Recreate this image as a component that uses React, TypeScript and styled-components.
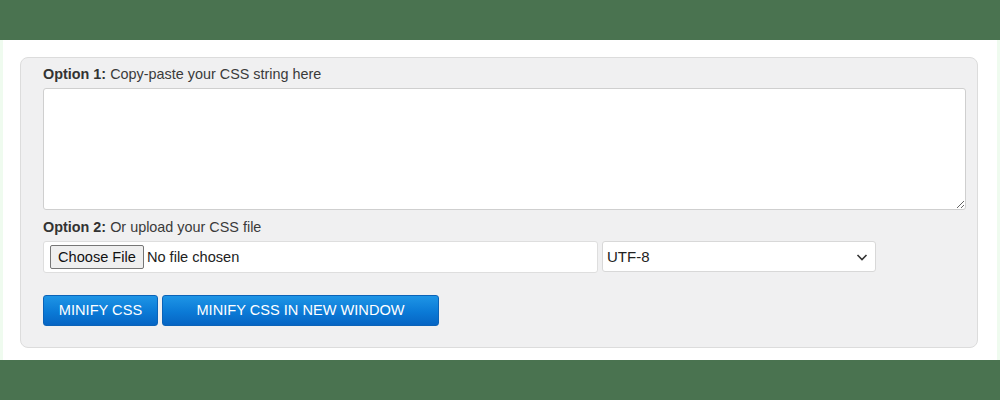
import React from "react";
import styled, { createGlobalStyle } from "styled-components";

const Global = createGlobalStyle`
  html, body { margin: 0; padding: 0; background: #4a7350; }
  body { font-family: "Liberation Sans", Arial, sans-serif; }
  * { box-sizing: border-box; }
`;

const Page = styled.div`
  width: 1000px;
  height: 400px;
  padding: 40px 0;
  background: #4a7350;
`;

const Sheet = styled.div`
  height: 320px;
  background: #ffffff;
  border-left: 3px solid #effbef;
  border-right: 3px solid #effbef;
  padding: 17px 20px 0 17px;
`;

const Panel = styled.div`
  width: 958px;
  height: 291px;
  background: #f0f0f1;
  border: 1px solid #dcdcdc;
  border-radius: 8px;
  padding: 8px 10px 0 22px;
  display: flex;
  flex-direction: column;
`;

const Label = styled.div`
  font-size: 14.4px;
  line-height: 17px;
  color: #3a3a3a;
  margin-bottom: 5px;
  b { font-weight: bold; color: #333; }
`;

const TextArea = styled.textarea`
  width: 923px;
  height: 122px;
  border: 1px solid #cfcfcf;
  border-radius: 3px;
  background: #fff;
  resize: vertical;
  margin: 0 0 9px 0;
  display: block;
  font-family: "Liberation Sans", Arial, sans-serif;
  outline: none;
`;

const Row = styled.div`
  display: flex;
  gap: 4px;
  align-items: flex-start;
`;

const FileBox = styled.div`
  width: 555px;
  height: 32px;
  background: #fff;
  border: 1px solid #dedede;
  border-radius: 3px;
  display: flex;
  align-items: center;
  padding-left: 6px;
  gap: 3px;
  font-size: 14.6px;
  color: #222;
`;

const ChooseButton = styled.span`
  height: 24px;
  padding: 0 7px 0 7px;
  display: flex;
  align-items: center;
  background: #efefef;
  border: 1px solid #767676;
  border-radius: 2px;
  font-size: 14.6px;
  color: #111;
`;

const Select = styled.div`
  width: 274px;
  height: 31px;
  background: #fff;
  border: 1px solid #d8d8d8;
  border-radius: 3px;
  display: flex;
  align-items: center;
  justify-content: space-between;
  padding: 0 4px 0 4px;
  font-size: 15px;
  color: #222;
  svg { margin-right: 1px; }
`;

const ButtonRow = styled.div`
  display: flex;
  gap: 4px;
  margin-top: 22px;
`;

const Action = styled.button<{ $w: number }>`
  width: ${(p) => p.$w}px;
  height: 31px;
  border: 1px solid #0b63b8;
  border-radius: 3px;
  background: linear-gradient(to bottom, #1e95e6 0%, #0b7ad6 55%, #0665c4 100%);
  color: #fff;
  font-family: "Liberation Sans", Arial, sans-serif;
  font-size: 14.6px;
  text-transform: uppercase;
  padding: 0 0 2px 0;
  cursor: pointer;
`;

export default function App() {
  return (
    <>
      <Global />
      <Page>
        <Sheet>
          <Panel>
            <Label>
              <b>Option 1:</b> Copy-paste your CSS string here
            </Label>
            <TextArea />
            <Label>
              <b>Option 2:</b> Or upload your CSS file
            </Label>
            <Row>
              <FileBox>
                <ChooseButton>Choose File</ChooseButton>
                No file chosen
              </FileBox>
              <Select>
                UTF-8
                <svg width="16" height="16" viewBox="0 0 16 16">
                  <path d="M3.5 6 L8 10.5 L12.5 6" fill="none" stroke="#333" strokeWidth="1.6" />
                </svg>
              </Select>
            </Row>
            <ButtonRow>
              <Action $w={115}>Minify CSS</Action>
              <Action $w={277}>Minify CSS in new window</Action>
            </ButtonRow>
          </Panel>
        </Sheet>
      </Page>
    </>
  );
}
